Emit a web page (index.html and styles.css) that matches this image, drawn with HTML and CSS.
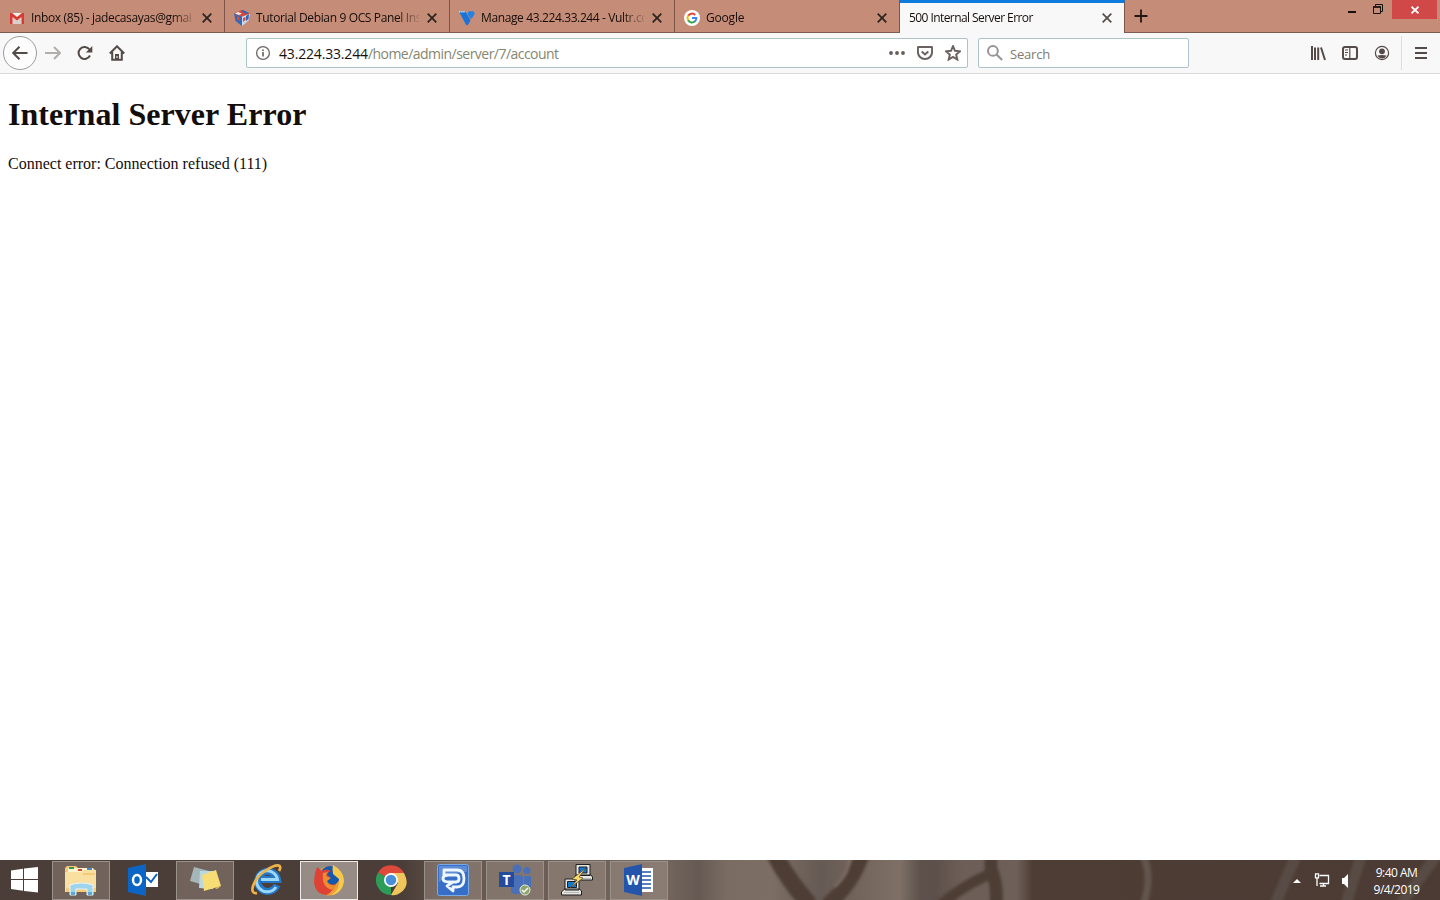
FILE: index.html
```html
<!DOCTYPE html>
<html lang="en">
<head>
<meta charset="utf-8">
<title>500 Internal Server Error</title>
<link rel="stylesheet" href="styles.css">
</head>
<body>
<div class="screen">
  <header class="tabstrip">
    <div class="tab">
      <svg class="favicon" viewBox="0 0 16 16"><path fill="#f5efed" d="M1 3h14v11H1z"/><path fill="#d9cfcd" d="M3.500 14V7L8 10.500 12.500 7v7z"/><path fill="#d83a34" d="M1 3h2l5 4 5-4h2v11h-2.500V7L8 10.500 3.500 7v7H1z"/></svg>
      <span class="title t1">Inbox (85) - jadecasayas@gmai</span>
      <svg class="close" viewBox="0 0 10 10"><path d="M.7.7l8.600 8.600M9.300.7L.7 9.300"/></svg>
    </div>
    <div class="tab">
      <svg class="favicon" viewBox="0 0 16 16"><path fill="#3468b8" d="M0 3.500l8 3V16L1.500 11z"/><path fill="#c8dcec" d="M8 6.500l8-3-1.500 7L8 16z"/><path fill="#d84435" d="M0 3.500L8 0l8 3.500-8 3z"/><path fill="#e9edf2" d="M4 2l4 1.500L5 5 1 3.500z"/><path fill="#3166b7" d="M7 .5L9 0l6 3-3 1zM12 6l3-2-.5 5-2.500 2z"/><path fill="#dc4938" d="M2.500 6l3 1v4l-2-1z"/><path fill="#dc4938" d="M9 8l2.500-1v3L9 12z"/></svg>
      <span class="title t2">Tutorial Debian 9 OCS Panel Ins</span>
      <svg class="close" viewBox="0 0 10 10"><path d="M.7.7l8.600 8.600M9.300.7L.7 9.300"/></svg>
    </div>
    <div class="tab">
      <svg class="favicon" viewBox="0 0 16 16"><path fill="#1974d9" d="M0 1.500h5q1.500 0 2.300 1.400L11 9.300q.6 1.100 0 2.200L9.300 14.300q-1.300 1.800-2.600 0z"/><path fill="#2682e2" d="M8.800 2.600Q9.500 1.200 11 1.200h3q2.200.8 1.500 2.800L13 8.300q-1.100 1-2-.2L8.800 4.400q-.5-.9 0-1.800z"/><path stroke="#b9dbf5" stroke-width="1.600" stroke-dasharray="1.500 .6" d="M0 1.800h6"/></svg>
      <span class="title t3">Manage 43.224.33.244 - Vultr.co</span>
      <svg class="close" viewBox="0 0 10 10"><path d="M.7.7l8.600 8.600M9.300.7L.7 9.300"/></svg>
    </div>
    <div class="tab">
      <svg class="favicon" viewBox="0 0 16 16"><circle cx="8" cy="8" r="8" fill="#fff"/><g fill="none" stroke-width="2"><path stroke="#e44436" d="M4.200 5.800A4.400 4.400 0 0 1 11.200 5"/><path stroke="#f6b913" d="M4.200 5.600A4.600 4.600 0 0 0 4.200 10.400"/><path stroke="#34a653" d="M4.200 10.200A4.400 4.400 0 0 0 11 11.300"/><path stroke="#4285f4" d="M8 8h4.400a4.400 4.400 0 0 1-1.600 3.500"/></g></svg>
      <span class="title t4">Google</span>
      <svg class="close" viewBox="0 0 10 10"><path d="M.7.7l8.600 8.600M9.300.7L.7 9.300"/></svg>
    </div>
    <div class="tab active">
      <span class="title t5">500 Internal Server Error</span>
      <svg class="close" viewBox="0 0 10 10"><path d="M.7.7l8.600 8.600M9.300.7L.7 9.300"/></svg>
    </div>
    <svg class="newtab" viewBox="0 0 14 14"><path d="M7 .5v13M.5 7h13"/></svg>
    <div class="winctl">
      <svg class="min" viewBox="0 0 10 10"><path fill="#17100d" d="M1 5h8v2H1z"/></svg>
      <svg class="restore" viewBox="0 0 11 11"><path fill="none" stroke="#17100d" d="M2.500 2V.5h7v7H8M.5 3h7v6.500h-7z"/><path stroke="#17100d" stroke-width="1.500" d="M0 3h8"/></svg>
      <div class="winclose"><svg viewBox="0 0 8 8"><path stroke="#fff" stroke-width="1.700" d="M.5.7l7 6.600M7.500.7l-7 6.600"/></svg></div>
    </div>
  </header>

  <nav class="toolbar">
    <div class="back"><svg viewBox="0 0 16 16"><path d="M15.500 8H1.500M7.500 1.700L1.200 8l6.300 6.300"/></svg></div>
    <svg class="forward" viewBox="0 0 16 16"><path d="M0 8h14.500M9 2l6 6-6 6"/></svg>
    <svg class="reload" viewBox="0 0 16 16"><path d="M13 10.500A6 6 0 1 1 12.500 4.500"/><path class="fill" d="M15.300 1v6.500H8.800z"/></svg>
    <svg class="home" viewBox="0 0 16 16"><path d="M.8 8.500L8 1.300l7.200 7.200M3.200 7v7.800h9.600V7"/><path class="fill" d="M6 9h4v6H6z"/><path class="knob" d="M8 11v2"/></svg>
    <div class="urlbar">
      <svg class="info" viewBox="0 0 16 16"><circle cx="8" cy="8" r="6.400"/><path stroke-width="1.700" d="M8 7v4.500M8 4.400v1.500"/></svg>
      <span class="url"><b>43.224.33.244</b>/home/admin/server/7/account</span>
      <svg class="dots" viewBox="0 0 16 16"><circle cx="2" cy="8" r="1.900"/><circle cx="8" cy="8" r="1.900"/><circle cx="14" cy="8" r="1.900"/></svg>
      <svg class="pocket" viewBox="0 0 16 16"><path d="M1.500 1.900h13q.6 0 .6.600v4.500a7.100 7.100 0 0 1-14.200 0V2.500q0-.6.600-.6zM4.700 6.400L8 9.500l3.300-3.100"/></svg>
      <svg class="star" viewBox="0 0 16 16"><path d="M8 1.200l2 4.600 5 .5-3.800 3.300 1.100 4.900L8 12l-4.300 2.500 1.100-4.900L1 6.300l5-.5z"/></svg>
    </div>
    <div class="searchbar">
      <svg viewBox="0 0 16 16"><circle cx="5.900" cy="5.900" r="4.900"/><path d="M9.500 9.500l5.700 5.500"/></svg>
      <span>Search</span>
    </div>
    <div class="tools">
      <svg viewBox="0 0 16 16"><path stroke-width="2" d="M2 1v14M5 2.500V15M8.200 2.500V15M11 2.500L15 15"/></svg>
      <svg viewBox="0 0 16 16"><rect x="1" y="1.900" width="14" height="12.200" rx="2"/><path stroke-width="1.200" d="M7.800 2v12M3 5h3M3 7.500h3M3 10h2"/></svg>
      <svg viewBox="0 0 16 16"><circle class="ring" cx="8" cy="8" r="6.600"/><circle class="fill" cx="8" cy="6.300" r="2.900"/><path class="fill" d="M3.500 10.500q4.500-1 9 0-1.500 3-4.500 3t-4.500-3z"/></svg>
    </div>
    <div class="menu"><svg viewBox="0 0 12 12"><path d="M0 1h12M0 6h12M0 11h12"/></svg></div>
  </nav>

  <main class="page">
    <h1>Internal Server Error</h1>
    <p>Connect error: Connection refused (111)</p>
  </main>

  <footer class="taskbar">
    <svg class="wallpaper" viewBox="0 0 1440 40" preserveAspectRatio="none">
      <defs>
        <linearGradient id="base">
          <stop offset="0" stop-color="#4b3e38"/><stop offset=".28" stop-color="#4b3e38"/><stop offset=".32" stop-color="#665850"/>
          <stop offset=".46" stop-color="#75675f"/><stop offset=".485" stop-color="#655a53"/><stop offset=".505" stop-color="#7a6c63"/>
          <stop offset=".535" stop-color="#7d6e65"/><stop offset=".57" stop-color="#655a54"/><stop offset=".59" stop-color="#716259"/>
          <stop offset=".625" stop-color="#7e7067"/><stop offset=".639" stop-color="#5d514b"/><stop offset=".65" stop-color="#5d504a"/>
          <stop offset=".668" stop-color="#6d5f58"/><stop offset=".706" stop-color="#6e6059"/><stop offset=".717" stop-color="#4d3d35"/><stop offset="1" stop-color="#4b3b34"/>
        </linearGradient>
        <filter id="soft" x="-20%" width="140%"><feGaussianBlur stdDeviation="1.500"/></filter>
      </defs>
      <rect width="1440" height="40" fill="url(#base)"/>
      <g filter="url(#soft)" fill="none" stroke="#4e3e36">
        <path stroke-width="17" d="M775-5Q788 20 810 45"/><path stroke-width="15" d="M862-5Q852 25 827 45"/>
        <path stroke-width="11" d="M940 46Q962 25 995 12"/><path stroke-width="13" d="M991-5v14Q998 24 996 45"/>
        <path stroke-width="1.500" stroke="#8b7c73" d="M850-2Q850 12 835 27"/>
        <path stroke-width="7" stroke="#62544d" d="M1143-5q10 23 0 50"/><path stroke-width="11" stroke="#594b44" d="M1296-4L1275 44M1361-4l-15 48M1436-4l-35 48"/>
      </g>
    </svg>
    <div class="apps">
      <div class="start"><svg width="28" height="26" viewBox="0 0 28 26"><path fill="#fff" d="M0 3.500l12-1.700V12H0zM13 1.600L27 0v12H13zM0 13h12v10.700L0 22zM13 13h14v12.500L13 24z"/></svg></div>
      <div class="app open"><svg width="36" height="32" viewBox="0 0 36 32"><path fill="#f3c775" d="M2 4l2-2h9l2 2h15l3 3v21H2z"/><path fill="#fff5cc" d="M5 4h25v4H5z"/><path fill="#f9dfa0" d="M2 8h16l3-2h12v22H2z"/><path fill="#f4cb78" d="M20 9h12v2H20zM3 24h30v4H3z"/><path fill="#309a50" d="M6 3h5v2H6z"/><path fill="#d64531" d="M15 5h4v2h-4z"/><path fill="#4289cd" d="M24 4h5v2h-5z"/><path fill="#9fd4ed" stroke="#e3f6fd" d="M7 21q11-4 23 0v10h-6v-6H13v6H7z"/><path fill="#60a9ce" d="M8 28h4v3H8zM25 28h4v3h-4z"/></svg></div>
      <div class="app"><svg width="32" height="32" viewBox="0 0 32 32"><path fill="#fff" d="M18 8h13v15H18z"/><path fill="none" stroke="#0b62bf" stroke-width="2" d="M19 13l5 5 6-8"/><path fill="#0b65c5" d="M1 4l18-4v32L1 28z"/><ellipse cx="10" cy="16" rx="4" ry="5" fill="none" stroke="#fff" stroke-width="2.500"/></svg></div>
      <div class="app open"><svg width="34" height="30" viewBox="0 0 34 30"><path fill="#a6b5b8" d="M6 2l15 4-5 14L2 16z"/><path fill="#b8d9e1" d="M12 6h13v18l-14-1z"/><path fill="#f7dd74" d="M14 10l14-5 5 16-17 5z"/><path fill="#e9c95d" d="M27 23l6-2-4 3z"/></svg></div>
      <div class="app"><svg width="32" height="32" viewBox="0 0 32 32"><path fill="none" stroke="#2478c9" stroke-width="7" d="M26 21A10 10 0 1 1 26.500 15.500H11"/><path fill="none" stroke="#9bd9f7" stroke-width="3" d="M25 23A10.500 10.500 0 1 1 26.500 15.500H10"/><path fill="none" stroke="#efb347" stroke-width="2.700" d="M6 29C-3 31 2 15 14 7S32 0 28 7"/></svg></div>
      <div class="app open current"><svg width="32" height="32" viewBox="0 0 32 32"><circle cx="16" cy="17" r="14.500" fill="#ee9b38"/><circle cx="17" cy="12" r="10" fill="#1559ae"/><path fill="#df4135" d="M4 3l5 4q5-3 9 0l-5 3 4 3-5 4q4 5 11 3-4 9-10 11Q2 30 1 18 1 10 4 3z"/><path fill="#ed8b2e" d="M10 9l5-1-2 4 5 2-4 3q2 5 9 4l-4 5Q8 23 10 9z"/><path fill="#f6c94d" d="M20 1q11 6 11 16-2 13-13 14 9-5 8-16l-6-5q-1-5 0-9z"/></svg></div>
      <div class="app"><svg width="32" height="32" viewBox="0 0 32 32"><path fill="#df493c" d="M16 16L3 8.500A15 15 0 0 1 29 9z"/><path fill="#2b9d58" d="M16 16v15A15 15 0 0 1 3 8.500z"/><path fill="#f0c65c" d="M16 9h13q7 13-4 20-4 3-9 2l7-12z"/><circle cx="16" cy="16" r="7" fill="#fff"/><circle cx="16" cy="16" r="5.300" fill="#4a8ed9"/></svg></div>
      <div class="app open"><svg width="32" height="32" viewBox="0 0 32 32"><rect x=".5" y=".5" width="31" height="31" rx="2" fill="#376fc8" stroke="#7baae6"/><path fill="#5e8dd6" d="M2 2h28v6Q14 8 2 18z"/><path fill="none" stroke="#eef6ff" stroke-width="2.800" stroke-linecap="round" stroke-linejoin="round" d="M12 11H7V6h13q7 0 7 8.500T20 23h-4v4l-6-5 6-4h3q3 0 3-3.500T19 11h-7q-6 0-6 3.500t6 3.500h5"/></svg></div>
      <div class="app open"><svg width="34" height="32" viewBox="0 0 34 32"><g fill="#4a70ba"><circle cx="19" cy="5" r="4.500"/><circle cx="29" cy="6.500" r="3.500"/><rect x="13" y="11" width="12" height="19" rx="4"/><path d="M26 12h7v11l-4 4h-3z"/></g><path fill="#234b9e" d="M1 8h15v15H1z"/><text x="8.500" y="20.500" class="badge">T</text><circle cx="27" cy="26" r="5" fill="#8ca56d" stroke="#e6ead9"/><path fill="none" stroke="#fff" stroke-width="1.500" d="M24 26l2 2 4-4"/></svg></div>
      <div class="app open"><svg width="32" height="32" viewBox="0 0 32 32"><g stroke="#211f1f"><path fill="#e6e6e2" d="M15 .5h14v11H15zM13 14l2-3h15l1.500 2v3H13zM4 15h14v11H4zM.5 28l3-3h15l2 2v4H.5z"/><path fill="#1677cc" d="M18 3h8v6h-8zM6.500 17.500h9v6h-9z"/></g><path fill="#b8b8b4" d="M15 14h15v1H15zM3 28h15v1H3z"/><path fill="#fbd968" stroke="#4c4532" stroke-width=".7" d="M25 4L11 15l5 1-7 8 13-10-4-1z"/></svg></div>
      <div class="app open"><svg width="32" height="32" viewBox="0 0 32 32"><path fill="#fff" d="M17 4h13v24H17z"/><path stroke="#2456ab" stroke-width="1.500" d="M19 8h9M19 12h9M19 16h9M19 20h9M19 24h9"/><path fill="#2355ac" d="M1 4l18-4v32L1 28z"/><text x="10" y="21" class="badge">W</text></svg></div>
    </div>
    <div class="tray">
      <svg width="8" height="4" viewBox="0 0 8 4"><path fill="#fff" d="M0 4l4-4 4 4z"/></svg>
      <svg class="net" width="16" height="15" viewBox="0 0 16 15"><path fill="none" stroke="#fff" stroke-width="1.300" d="M5.500 2.500h9v8h-9M6 13h6M9.500 10.500V13M1.500.8h3v4h-3zM3 5v8"/></svg>
      <svg class="sound" width="8" height="14" viewBox="0 0 8 14"><path fill="#fff" d="M0 4h2l4-4v14l-4-4H0z"/></svg>
      <div class="clock"><span class="time">9:40 AM</span><span class="date">9/4/2019</span></div>
    </div>
  </footer>
</div>
</body>
</html>
```
FILE: styles.css
```css
* { box-sizing: border-box; }
body { margin: 0; overflow: hidden; font-family: "Open Sans", "Noto Sans", sans-serif; }
svg { display: block; flex: none; }
.screen { width: 1440px; height: 900px; display: flex; flex-direction: column; background: #fff; }

.tabstrip { height: 33px; display: flex; background: #c58d78; border-bottom: 1px solid #7c5b50; }
.tab { width: 225px; height: 32px; padding: 3px 12px 0 9px; display: flex; align-items: center; border-right: 1px solid #7c5448; }
.tab.active { height: 33px; padding-top: 0; border-top: 3px solid #0f7bdc; background: #f8f8f8; }
.favicon { width: 16px; height: 16px; margin-right: 6px; fill: none; }
.title { flex: 1; min-width: 0; margin-right: 8px; font-size: 12px; line-height: 18px; color: #160d0a; white-space: nowrap; -webkit-mask-image: linear-gradient(to right, #000 87%, transparent 102%); mask-image: linear-gradient(to right, #000 87%, transparent 102%); }
.t1 { letter-spacing: -.35px; }
.t2 { letter-spacing: -.36px; }
.t3 { letter-spacing: -.38px; }
.t4 { letter-spacing: -.2px; }
.t5 { letter-spacing: -.57px; }
.close { width: 10px; height: 10px; stroke: #2b211e; stroke-width: 1.700; }
.active .close { stroke: #544b48; }
.newtab { width: 14px; height: 14px; margin: 9px 0 0 9px; stroke: #211814; stroke-width: 1.800; }
.winctl { margin-left: auto; display: flex; align-items: flex-start; }
.min { width: 10px; height: 10px; margin: 6px 16px 0 0; }
.restore { width: 11px; height: 11px; margin: 4px 8px 0 0; }
.winclose { width: 45px; height: 19px; margin-right: 3px; display: flex; align-items: center; justify-content: center; background: #d04848; }
.winclose svg { width: 8px; height: 8px; }

.toolbar { height: 41px; display: flex; align-items: center; background: #f8f8f8; border-bottom: 1px solid #d9dadb; }
.toolbar svg { width: 16px; height: 16px; fill: none; stroke: #544b48; stroke-width: 2; }
.toolbar .fill { fill: #544b48; stroke: none; }
.toolbar .ring { stroke-width: 1.2; }
.toolbar .knob { stroke: #fff; stroke-width: 1; }
.back { width: 34px; height: 34px; margin-left: 3px; display: flex; align-items: center; justify-content: center; border: 1px solid #9f9b99; border-radius: 50%; background: #fdfdfd; }
.toolbar .forward { margin-left: 8px; stroke: #b2aeac; }
.toolbar .reload { margin-left: 16px; }
.toolbar .home { margin-left: 16px; }
.urlbar { width: 722px; height: 30px; margin-left: 121px; padding: 0 6px 0 8px; display: flex; align-items: center; border: 1px solid #aec3c8; border-radius: 2px; background: #fff; }
.toolbar .info { stroke: #6c6563; stroke-width: 1.300; }
.url { flex: 1; margin-left: 8px; padding-top: 2px; font-size: 14px; line-height: 20px; letter-spacing: -.53px; color: #85866f; white-space: nowrap; }
.url b { font-weight: 400; letter-spacing: -.17px; color: #17100e; }
.toolbar .dots { fill: #655d5a; stroke: none; }
.toolbar .pocket, .toolbar .star { margin-left: 12px; stroke: #6b6260; }
.searchbar { width: 211px; height: 30px; margin-left: 10px; padding-left: 8px; display: flex; align-items: center; border: 1px solid #aec3c8; border-radius: 2px; background: #fff; }
.toolbar .searchbar svg { stroke: #989493; }
.searchbar span { margin-left: 7px; padding-top: 2px; font-size: 13px; line-height: 20px; letter-spacing: -.2px; color: #7d7b6d; }
.tools { margin-left: auto; display: flex; gap: 16px; }
.menu { width: 39px; height: 34px; margin-left: 11px; display: flex; align-items: center; justify-content: center; border-left: 1px solid #dededf; }
.toolbar .menu svg { width: 12px; height: 12px; }

.page { flex: 1; padding: 0 8px; font-family: "Liberation Serif", "Times New Roman", serif; color: #130d0c; }
.page h1 { margin: 22px 0 0; font-size: 32px; line-height: 37px; letter-spacing: .05px; }
.page p { margin: 22px 0 0; font-size: 16px; line-height: 18px; }

.taskbar { position: relative; height: 40px; display: flex; justify-content: space-between; background: #4b3e38; }
.wallpaper { position: absolute; inset: 0; width: 100%; height: 100%; }
.apps, .tray { position: relative; display: flex; }
.apps { gap: 4px; }
.start { width: 48px; display: flex; align-items: center; justify-content: center; padding-left: 2px; }
.app { width: 58px; height: 40px; display: flex; align-items: center; justify-content: center; }
.app.open { height: 39px; margin-top: 1px; padding-bottom: 1px; border: 1px solid #9b918b; background: rgba(170, 155, 145, .4); }
.app.current { border-color: #eeeae7; background: #968c85; }
.badge { font: 700 14px "Open Sans", sans-serif; fill: #fff; text-anchor: middle; }
.tray { align-items: center; padding: 1px 20px 0 0; }
.net { margin-left: 13px; }
.sound { margin-left: 12px; }
.clock { width: 47px; margin-left: 23px; display: flex; flex-direction: column; align-items: center; font-size: 12px; line-height: 17px; color: #fff; white-space: nowrap; }
.time { letter-spacing: -.5px; }
.date { letter-spacing: -.5px; }
```
